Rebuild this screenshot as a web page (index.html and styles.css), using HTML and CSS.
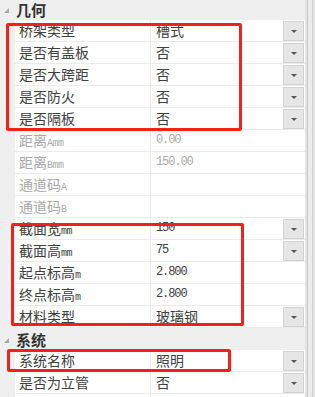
FILE: index.html
```html
<!DOCTYPE html>
<html lang="zh-CN">
<head>
    <meta charset="UTF-8">
    <meta name="viewport" content="width=device-width, initial-scale=1.0">
    <title>属性</title>
    <link rel="stylesheet" href="styles.css">
</head>
<body>
    <div class="grid">
        <div class="panel">
            <div class="section-head"><span class="toggle"></span><span class="title">几何</span></div>
            <div class="row"><span class="gutter"></span><span class="name">桥架类型</span><span class="value">槽式<span class="drop"></span></span></div>
            <div class="row"><span class="gutter"></span><span class="name">是否有盖板</span><span class="value">否<span class="drop"></span></span></div>
            <div class="row"><span class="gutter"></span><span class="name">是否大跨距</span><span class="value">否<span class="drop"></span></span></div>
            <div class="row"><span class="gutter"></span><span class="name">是否防火</span><span class="value">否<span class="drop"></span></span></div>
            <div class="row"><span class="gutter"></span><span class="name">是否隔板</span><span class="value">否<span class="drop"></span></span></div>
            <div class="row disabled"><span class="gutter"></span><span class="name">距离<span class="unit">Amm</span></span><span class="value num">0.00</span></div>
            <div class="row disabled"><span class="gutter"></span><span class="name">距离<span class="unit">Bmm</span></span><span class="value num">150.00</span></div>
            <div class="row disabled"><span class="gutter"></span><span class="name">通道码<span class="unit">A</span></span><span class="value"></span></div>
            <div class="row disabled"><span class="gutter"></span><span class="name">通道码<span class="unit">B</span></span><span class="value"></span></div>
            <div class="row"><span class="gutter"></span><span class="name">截面宽<span class="unit">mm</span></span><span class="value num">150<span class="drop"></span></span></div>
            <div class="row"><span class="gutter"></span><span class="name">截面高<span class="unit">mm</span></span><span class="value num">75<span class="drop"></span></span></div>
            <div class="row"><span class="gutter"></span><span class="name">起点标高<span class="unit">m</span></span><span class="value num">2.800</span></div>
            <div class="row"><span class="gutter"></span><span class="name">终点标高<span class="unit">m</span></span><span class="value num">2.800</span></div>
            <div class="row"><span class="gutter"></span><span class="name">材料类型</span><span class="value">玻璃钢<span class="drop"></span></span></div>
            <div class="section-head"><span class="toggle"></span><span class="title">系统</span></div>
            <div class="row"><span class="gutter"></span><span class="name">系统名称</span><span class="value">照明<span class="drop"></span></span></div>
            <div class="row"><span class="gutter"></span><span class="name">是否为立管</span><span class="value">否<span class="drop"></span></span></div>
            <div class="row"><span class="gutter"></span><span class="name"></span><span class="value"></span></div>
        </div>
        <div class="scrollbar"></div>

        <div class="mark mark-geometry"></div>
        <div class="mark mark-section"></div>
        <div class="mark mark-system"></div>
    </div>
</body>
</html>
```

FILE: styles.css
```css
body {
    margin: 0;
    font-family: "Noto Sans CJK SC", "DejaVu Sans", sans-serif;
    font-size: 14px;
    color: #404040;
    background: #fff;
    overflow: hidden;
}

.grid {
    position: relative;
    display: flex;
    width: 315px;
    height: 397px;
    overflow: hidden;
}

.panel {
    flex: 1;
    margin-top: -2px;
}

.section-head {
    display: flex;
    align-items: center;
    height: 22px;
    background: #efefef;
}

.toggle {
    width: 0;
    height: 0;
    margin: 2px 7px 0 4px;
    border-left: 5px solid transparent;
    border-bottom: 5px solid #a8a8a8;
}

.title {
    font-weight: bold;
    font-size: 15px;
    color: #333;
}

.row {
    display: grid;
    grid-template-columns: 15px 136px 1fr;
    height: 22px;
}

.gutter {
    background: #efefef;
}

.name,
.value {
    height: 21px;
    line-height: 21px;
    border-bottom: 1px solid #ebebeb;
    white-space: nowrap;
}

.name {
    padding-left: 4px;
    border-right: 1px solid #ebebeb;
}

.value {
    display: flex;
    align-items: center;
    padding-left: 5px;
    padding-right: 1px;
}

.unit {
    font-family: "Liberation Mono", "DejaVu Sans Mono", monospace;
    font-size: 10px;
    letter-spacing: -0.5px;
}

.num {
    font-family: "Liberation Mono", "DejaVu Sans Mono", monospace;
    font-size: 12px;
    letter-spacing: -1.1px;
}

.disabled {
    color: #a9a9a9;
}

.drop {
    position: relative;
    margin-left: auto;
    width: 19px;
    height: 18px;
    background: #e6e6e6;
    border: 1px solid #d2d2d2;
}

.drop::after {
    content: "";
    position: absolute;
    left: 7px;
    top: 8px;
    border-left: 3px solid transparent;
    border-right: 3px solid transparent;
    border-top: 3px solid #555;
}

.scrollbar {
    width: 10px;
    background: linear-gradient(to right,
        #e4e4e4 0, #e4e4e4 2px,
        #c9c9c9 2px, #c9c9c9 3px,
        #ececec 3px, #ececec 7px,
        #cfcfcf 7px, #cfcfcf 8px,
        #e4e4e4 8px);
}

.mark {
    position: absolute;
    border: 3px solid #f5201a;
    border-radius: 2px;
    box-sizing: border-box;
}

.mark-geometry {
    left: 6px;
    top: 23px;
    width: 236px;
    height: 108px;
}

.mark-section {
    left: 11px;
    top: 223px;
    width: 233px;
    height: 103px;
}

.mark-system {
    left: 7px;
    top: 349px;
    width: 224px;
    height: 23px;
}
```
